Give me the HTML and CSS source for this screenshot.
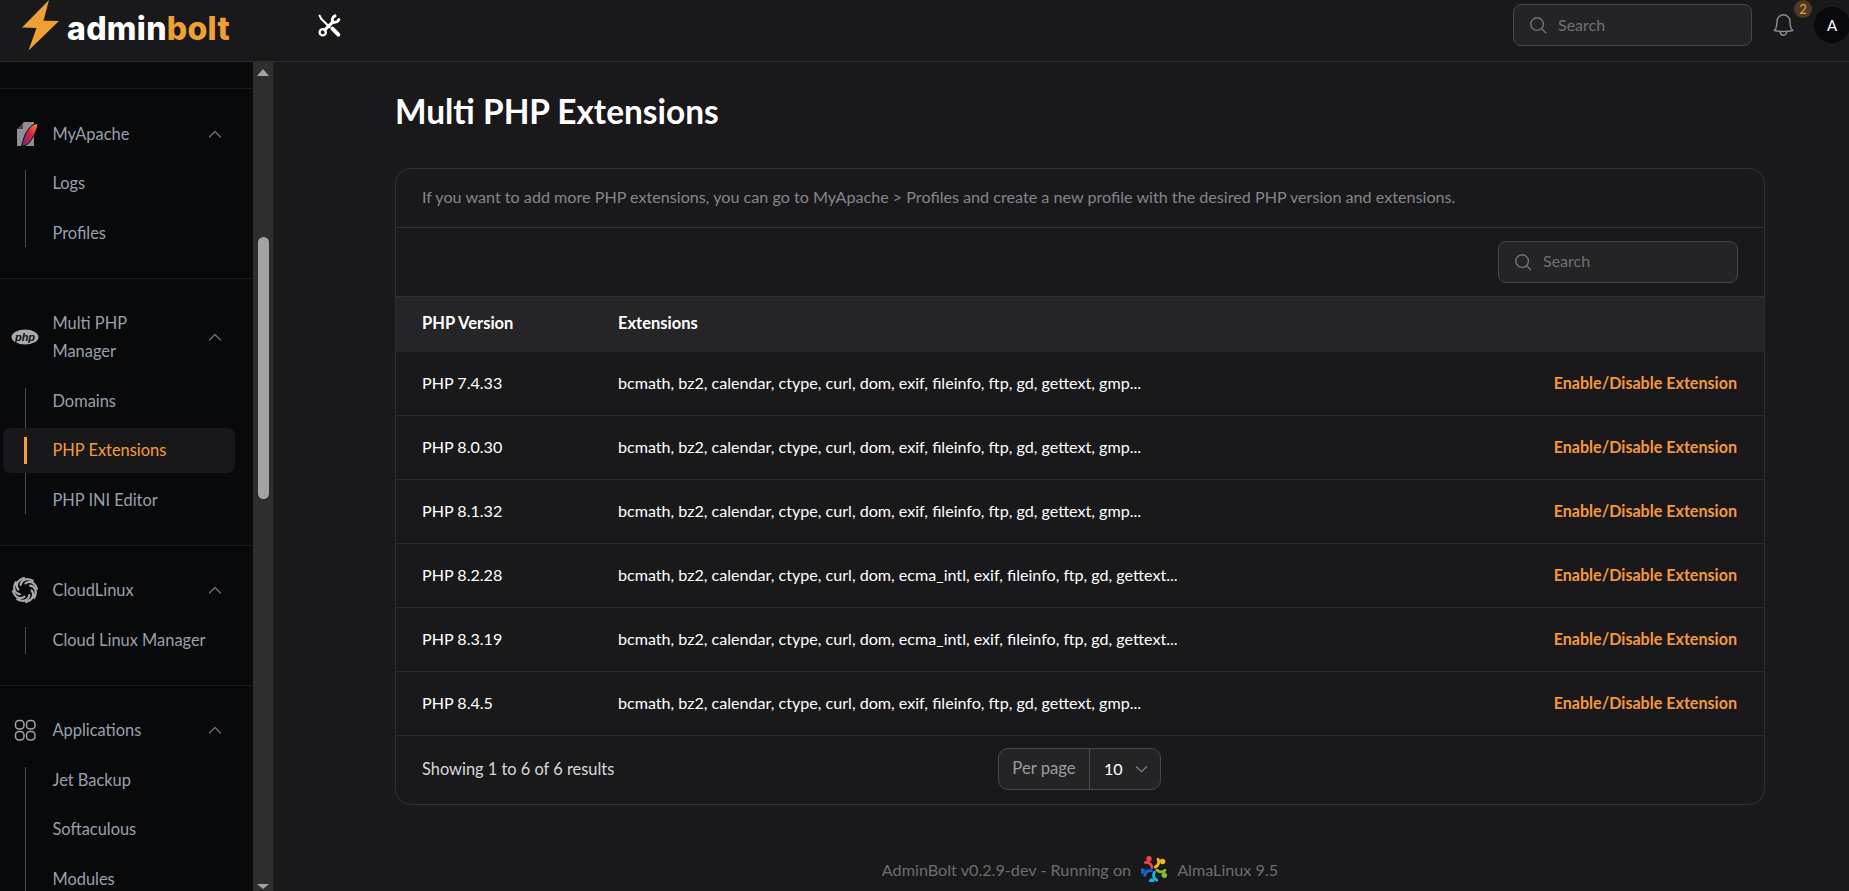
FILE: index.html
```html
<!DOCTYPE html>
<html lang="en">
<head>
<meta charset="utf-8">
<title>Multi PHP Extensions - AdminBolt</title>
<link rel="stylesheet" href="styles.css">
</head>
<body>
<header class="topbar">
  <div class="brand">
    <svg class="bolt" viewBox="0 0 40 52"><path fill="#efa033" d="M29 0 2 27.500 16.500 28 8.500 50.500 39 21 23.500 20.800Z"/></svg>
    <span class="wordmark">admin<b>bolt</b></span>
  </div>
  <svg class="tools" viewBox="0 0 24 24" fill="none" stroke="#fff" stroke-linecap="round" stroke-linejoin="round">
    <path stroke-width="2" d="M2.500 2.500 4 5.500 12 13.500"/>
    <path stroke-width="3.800" d="m14.800 15 5.700 5.700"/>
    <path stroke-width="3" d="M7.500 16.300 15.300 8.500"/>
    <path stroke-width="2.800" d="M17.300 2.700a4.600 4.600 0 0 0-2.300 5.800 4.600 4.600 0 0 0 6-2.200"/>
    <circle cx="5.500" cy="18.500" r="3" stroke-width="2.200"/>
  </svg>
  <div class="topright">
    <div class="search top-search">
      <svg class="search-icon" viewBox="0 0 20 20" fill="none" stroke="currentColor" stroke-width="1.600" stroke-linecap="round"><circle cx="9" cy="9" r="7"/><path d="m14.200 14.200 4.300 4.300"/></svg>
      <span class="search-label">Search</span>
    </div>
    <div class="bell-wrap">
      <svg class="bell" viewBox="0 0 22 26" fill="none" stroke="currentColor" stroke-width="1.600" stroke-linecap="round" stroke-linejoin="round"><path d="M11 2a7 7 0 0 0-7 7c0 5-1 8-3 10 5 1.300 15 1.300 20 0-2-2-3-5-3-10a7 7 0 0 0-7-7Z"/><path d="M7.500 20.500a3.500 3.500 0 0 0 7 0"/></svg>
      <span class="badge">2</span>
    </div>
    <span class="avatar">A</span>
  </div>
</header>
<div class="shell">
  <aside class="sidebar">
    <nav class="nav">
      <div class="nav-top"></div>
      <section class="group">
        <div class="group-head">
          <svg class="gicon" viewBox="0 0 28 26"><path fill="#8f8f93" d="M6 8 13 1H23V25H6Z"/><path fill="#08090b" d="M11.500 0 12 8H5Z" opacity=".55"/><defs><linearGradient id="f1" x1="1" y1="0" x2="0" y2="1"><stop offset="0" stop-color="#f79a2c"/><stop offset=".45" stop-color="#d8243f"/><stop offset="1" stop-color="#5b2a8c"/></linearGradient></defs><path fill="url(#f1)" stroke="#08090b" stroke-width="1" d="M27 2.500c-6 0-10.500 6-13 11.500-1.300 3-2.500 7.500-3.500 11.500l1.500-.5c3.500-.5 6.500-3 8.500-6.500 3.200-5 6-10.500 6.500-16Z"/></svg>
          <span class="gtitle">MyApache</span>
          <svg class="chev" viewBox="0 0 14 8" fill="none" stroke="currentColor" stroke-width="1.300" stroke-linecap="round" stroke-linejoin="round"><path d="m1.500 7 5.500-5.500L12.500 7"/></svg>
        </div>
        <ul class="sub">
          <li class="item">Logs</li>
          <li class="item">Profiles</li>
        </ul>
      </section>
      <section class="group">
        <div class="group-head">
          <svg class="gicon" viewBox="0 0 28 16"><ellipse cx="14" cy="8" rx="13.500" ry="7.500" fill="#a9a9ae"/><text x="14" y="11.500" class="php-mark">php</text></svg>
          <span class="gtitle">Multi PHP Manager</span>
          <svg class="chev" viewBox="0 0 14 8" fill="none" stroke="currentColor" stroke-width="1.300" stroke-linecap="round" stroke-linejoin="round"><path d="m1.500 7 5.500-5.500L12.500 7"/></svg>
        </div>
        <ul class="sub">
          <li class="item">Domains</li>
          <li class="item active">PHP Extensions</li>
          <li class="item">PHP INI Editor</li>
        </ul>
      </section>
      <section class="group">
        <div class="group-head">
          <svg class="gicon" viewBox="0 0 26 26" fill="none" stroke="#a8a8ac" stroke-width="2.200" stroke-linecap="round">
            <path d="M13.500 6.300C18 3 23 5.500 25 12"/>
            <path transform="rotate(45 13 13)" d="M13.500 6.300C18 3 23 5.500 25 12"/>
            <path transform="rotate(90 13 13)" d="M13.500 6.300C18 3 23 5.500 25 12"/>
            <path transform="rotate(135 13 13)" d="M13.500 6.300C18 3 23 5.500 25 12"/>
            <path transform="rotate(180 13 13)" d="M13.500 6.300C18 3 23 5.500 25 12"/>
            <path transform="rotate(225 13 13)" d="M13.500 6.300C18 3 23 5.500 25 12"/>
            <path transform="rotate(270 13 13)" d="M13.500 6.300C18 3 23 5.500 25 12"/>
            <path transform="rotate(315 13 13)" d="M13.500 6.300C18 3 23 5.500 25 12"/>
          </svg>
          <span class="gtitle">CloudLinux</span>
          <svg class="chev" viewBox="0 0 14 8" fill="none" stroke="currentColor" stroke-width="1.300" stroke-linecap="round" stroke-linejoin="round"><path d="m1.500 7 5.500-5.500L12.500 7"/></svg>
        </div>
        <ul class="sub">
          <li class="item">Cloud Linux Manager</li>
        </ul>
      </section>
      <section class="group">
        <div class="group-head">
          <svg class="gicon" viewBox="0 0 26 26" fill="none" stroke="#a4a4a8" stroke-width="1.500"><rect x="3.500" y="3.500" width="8.500" height="8.500" rx="3.500"/><rect x="14.500" y="3.500" width="8.500" height="8.500" rx="3.500"/><rect x="3.500" y="14.500" width="8.500" height="8.500" rx="3.500"/><rect x="14.500" y="14.500" width="8.500" height="8.500" rx="3.500"/></svg>
          <span class="gtitle">Applications</span>
          <svg class="chev" viewBox="0 0 14 8" fill="none" stroke="currentColor" stroke-width="1.300" stroke-linecap="round" stroke-linejoin="round"><path d="m1.500 7 5.500-5.500L12.500 7"/></svg>
        </div>
        <ul class="sub">
          <li class="item">Jet Backup</li>
          <li class="item">Softaculous</li>
          <li class="item">Modules</li>
        </ul>
      </section>
    </nav>
    <div class="scrollbar">
      <span class="arrow up"></span>
      <span class="thumb"></span>
      <span class="arrow down"></span>
    </div>
  </aside>
  <main class="main">
    <h1 class="title">Multi PHP Extensions</h1>
    <section class="card">
      <div class="info">If you want to add more PHP extensions, you can go to MyApache &gt; Profiles and create a new profile with the desired PHP version and extensions.</div>
      <div class="toolbar">
        <div class="search table-search">
          <svg class="search-icon" viewBox="0 0 20 20" fill="none" stroke="currentColor" stroke-width="1.600" stroke-linecap="round"><circle cx="9" cy="9" r="7"/><path d="m14.200 14.200 4.300 4.300"/></svg>
          <span class="search-label">Search</span>
        </div>
      </div>
      <div class="row head"><span class="c1">PHP Version</span><span class="c2">Extensions</span></div>
      <div class="row"><span class="c1">PHP 7.4.33</span><span class="c2">bcmath, bz2, calendar, ctype, curl, dom, exif, fileinfo, ftp, gd, gettext, gmp...</span><a class="action">Enable/Disable Extension</a></div>
      <div class="row"><span class="c1">PHP 8.0.30</span><span class="c2">bcmath, bz2, calendar, ctype, curl, dom, exif, fileinfo, ftp, gd, gettext, gmp...</span><a class="action">Enable/Disable Extension</a></div>
      <div class="row"><span class="c1">PHP 8.1.32</span><span class="c2">bcmath, bz2, calendar, ctype, curl, dom, exif, fileinfo, ftp, gd, gettext, gmp...</span><a class="action">Enable/Disable Extension</a></div>
      <div class="row"><span class="c1">PHP 8.2.28</span><span class="c2">bcmath, bz2, calendar, ctype, curl, dom, ecma_intl, exif, fileinfo, ftp, gd, gettext...</span><a class="action">Enable/Disable Extension</a></div>
      <div class="row"><span class="c1">PHP 8.3.19</span><span class="c2">bcmath, bz2, calendar, ctype, curl, dom, ecma_intl, exif, fileinfo, ftp, gd, gettext...</span><a class="action">Enable/Disable Extension</a></div>
      <div class="row"><span class="c1">PHP 8.4.5</span><span class="c2">bcmath, bz2, calendar, ctype, curl, dom, exif, fileinfo, ftp, gd, gettext, gmp...</span><a class="action">Enable/Disable Extension</a></div>
      <div class="pager">
        <span class="showing">Showing 1 to 6 of 6 results</span>
        <div class="perpage">
          <span class="pp-label">Per page</span>
          <span class="pp-value">10<svg class="pp-chev" viewBox="0 0 14 8" fill="none" stroke="currentColor" stroke-width="1.400" stroke-linecap="round" stroke-linejoin="round"><path d="m1.500 1.500 5.500 5.500 5.500-5.500"/></svg></span>
        </div>
      </div>
    </section>
    <footer class="foot">
      <span>AdminBolt v0.2.9-dev - Running on</span>
      <svg class="alma" viewBox="0 0 26 26" fill="none" stroke-width="2.800" stroke-linecap="round">
        <g stroke="#f0434a"><circle cx="8" cy="2.800" r="1.300" fill="#f0434a"/><path d="M4.500 6.500c3-.5 6 1 6.500 5"/></g>
        <g stroke="#f6b51e" transform="rotate(72 13 13.500)"><circle cx="8" cy="2.800" r="1.300" fill="#f6b51e"/><path d="M4.500 6.500c3-.5 6 1 6.500 5"/></g>
        <g stroke="#86bd3c" transform="rotate(144 13 13.500)"><circle cx="8" cy="2.800" r="1.300" fill="#86bd3c"/><path d="M4.500 6.500c3-.5 6 1 6.500 5"/></g>
        <g stroke="#1fb0e8" transform="rotate(216 13 13.500)"><circle cx="8" cy="2.800" r="1.300" fill="#1fb0e8"/><path d="M4.500 6.500c3-.5 6 1 6.500 5"/></g>
        <g stroke="#1465d8" transform="rotate(288 13 13.500)"><circle cx="8" cy="2.800" r="1.300" fill="#1465d8"/><path d="M4.500 6.500c3-.5 6 1 6.500 5"/></g>
      </svg>
      <span>AlmaLinux 9.5</span>
    </footer>
  </main>
</div>
</body>
</html>
```
FILE: styles.css
```css
* { box-sizing: border-box; }
html, body { height: 100%; }
body {
  margin: 0;
  height: 891px;
  overflow: hidden;
  display: flex;
  flex-direction: column;
  background: #19191b;
  color: #fff;
  font-family: "Lato", "Liberation Sans", sans-serif;
  font-size: 16.100px;
}
.topbar {
  flex: none;
  height: 62px;
  display: flex;
  align-items: center;
  border-bottom: 1px solid #2b2b2e;
  background: #19191b;
}
.brand { display: flex; align-items: center; width: 317px; padding-left: 20px; height: 61px; }
.bolt { width: 40px; height: 52px; margin-top: -10px; flex: none; }
.wordmark { margin-left: 7px; font-family: "Inter", sans-serif; font-weight: 800; font-size: 32px; letter-spacing: 0.3px; margin-top: -4px; }
.wordmark b { color: #efa033; font-weight: 800; }
.tools { width: 25px; height: 25px; margin-top: -11px; }
.topright { margin-left: auto; display: flex; align-items: center; height: 61px; }
.search {
  display: flex;
  align-items: center;
  height: 42px;
  background: #242427;
  border: 1px solid #47474b;
  border-radius: 8px;
  color: #6f6f75;
  font-size: 16px;
}
.search-label { padding-bottom: 2px; }
.search-icon { width: 18px; height: 18px; flex: none; margin-right: 11px; }
.top-search { width: 239px; padding-left: 15px; margin-top: -11px; margin-right: 1px; }
.table-search { width: 240px; padding-left: 15px; }
.bell-wrap { position: relative; margin-left: 20px; width: 41px; height: 50px; margin-top: -11px; }
.bell { width: 21px; height: 24px; color: #8a8a8e; display: block; margin-top: 13px; }
.badge {
  position: absolute;
  left: 21px;
  top: 0;
  width: 18px;
  height: 18px;
  border-radius: 50%;
  background: #4c3a26;
  color: #f5a033;
  font-size: 13px;
  line-height: 18px;
  text-align: center;
}
.avatar {
  flex: none;
  width: 36px;
  height: 36px;
  margin-right: -1px;
  margin-top: -11px;
  border-radius: 50%;
  background: #08090b;
  color: #fff;
  text-align: center;
  line-height: 36px;
  font-size: 15px;
}
.shell { flex: 1; min-height: 0; display: flex; }
.sidebar { flex: none; width: 273px; display: flex; background: #08090b; overflow: hidden; }
.nav { flex: 1; min-width: 0; overflow: hidden; }
.nav-top { height: 27px; border-bottom: 1px solid #1a1b1d; }
.group { padding: 23px 0 22px; border-bottom: 1px solid #1a1b1d; }
.group-head { display: flex; align-items: center; color: #98a0ae; padding: 7.500px 28px 9.500px 0; line-height: 28px; font-size: 16.400px; }
.gicon { flex: none; width: 28px; height: 26px; margin: 1px 13.500px 1px 11px; }
.gtitle { flex: 1; min-width: 0; padding-right: 40px; }
.chev { flex: none; width: 14px; height: 8px; color: #6f6f73; margin: 0 3px 0 0; }
.php-mark { font: italic 700 11px "Liberation Sans", sans-serif; fill: #111; text-anchor: middle; }
.sub {
  position: relative;
  list-style: none;
  margin: 4px 0 0;
  padding: 0;
  display: flex;
  flex-direction: column;
  gap: 4.500px;
}
.sub::before {
  content: "";
  position: absolute;
  left: 25px;
  top: 9px;
  bottom: 9px;
  width: 1px;
  background: #4a4a4e;
}
.item { position: relative; height: 45px; line-height: 43px; margin: 0 18px 0 3px; padding-left: 49.500px; color: #98a0ae; font-size: 16.400px; border-radius: 8px; }
.item.active { background: #18181a; color: #f59e33; }
.item.active::before {
  content: "";
  position: absolute;
  left: 21px;
  top: 9px;
  bottom: 9px;
  width: 3px;
  background: #f5a033;
}
.scrollbar { flex: none; width: 20px; height: 100%; background: #2e2e2e; display: flex; flex-direction: column; align-items: center; position: relative; }
.arrow { position: absolute; left: 4px; width: 0; height: 0; border-left: 6px solid transparent; border-right: 6px solid transparent; }
.arrow.up { top: 7px; border-bottom: 7px solid #a3a3a3; }
.arrow.down { bottom: 2px; border-top: 5px solid #a3a3a3; }
.thumb { width: 11px; height: 262px; margin-top: 175px; border-radius: 6px; background: #a3a3a3; }
.main { flex: 1; min-width: 0; padding: 0 84px 0 122px; background: #19191b; }
.title { margin: 0; padding-top: 30px; height: 106px; font-size: 33.400px; line-height: 38px; font-weight: 700; color: #fff; }
.card { border: 1px solid #303033; border-radius: 16px; overflow: hidden; }
.info { height: 59px; padding: 0 26px; line-height: 56px; color: #85858b; border-bottom: 1px solid #303033; font-size: 16.150px; }
.toolbar { height: 69px; display: flex; align-items: center; justify-content: flex-end; padding-right: 26px; padding-bottom: 1px; border-bottom: 1px solid #303033; }
.row { height: 64px; display: flex; align-items: center; padding: 0 27px 2px 26px; border-bottom: 1px solid #29292c; }
.row.head { height: 55px; background: #252528; border-bottom: 0; font-weight: 700; padding-bottom: 3px; font-size: 16.500px; }
.c1 { width: 196px; flex: none; }
.c2 { flex: 1; min-width: 0; }
.action { color: #f5983a; font-weight: 700; }
.pager { height: 68px; display: flex; align-items: center; padding: 0 27px 2px 26px; color: #d8d8dc; position: relative; }
.showing { flex: none; width: 576px; padding-bottom: 2px; font-size: 16.400px; }
.perpage { display: flex; height: 42px; width: 163px; align-items: center; background: #242427; border: 1px solid #47474b; border-radius: 10px; }
.pp-label { width: 91px; height: 100%; line-height: 38px; text-align: center; color: #9a9a9f; border-right: 1px solid #47474b; font-size: 16.700px; }
.pp-value { flex: 1; display: flex; align-items: center; padding: 0 0 2px 14px; color: #fff; }
.pp-chev { width: 13px; height: 8px; margin: 2px 0 0 12px; color: #77777c; }
.foot { display: flex; align-items: center; justify-content: center; gap: 10px; margin-top: 51px; color: #6c6c72; font-size: 16.200px; }
.alma { width: 26px; height: 26px; flex: none; }
```
